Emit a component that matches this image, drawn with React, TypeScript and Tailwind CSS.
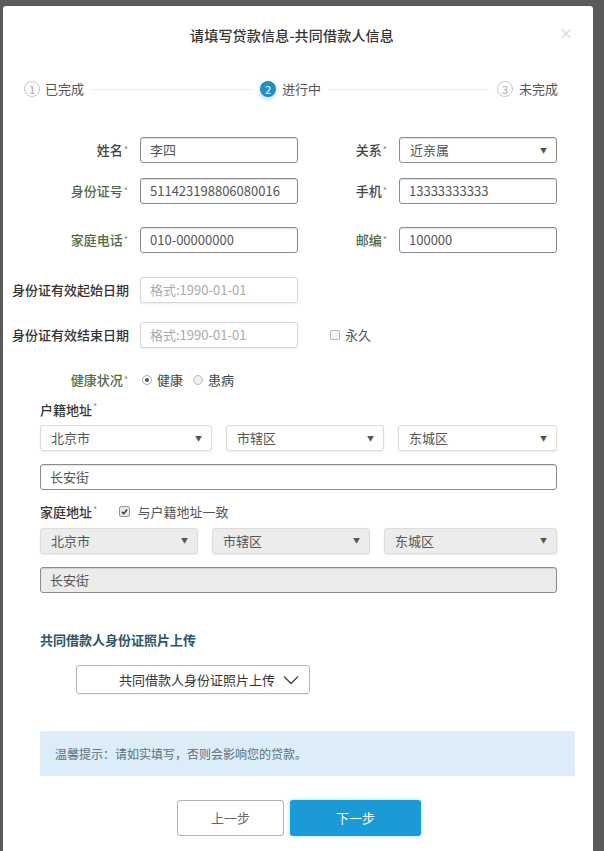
import React from "react";

const font = { fontFamily: '"Microsoft YaHei", "Noto Sans CJK SC", "Noto Sans", sans-serif' };

function Label({ text, green = false, star = true, w }: { text: string; green?: boolean; star?: boolean; w: string }) {
  return (
    <div className={`${w} shrink-0 text-right text-[13px] font-medium ${green ? "text-[#4d6b45]" : "text-[#444]"}`}>
      {text}
      {star && <sup className="text-[9px] text-[#999] ml-[1px] relative -top-[2px]">*</sup>}
    </div>
  );
}

function TextBox({ value, placeholder, w, light = false, gray = false }: { value?: string; placeholder?: string; w: string; light?: boolean; gray?: boolean }) {
  return (
    <div
      className={`${w} h-[26px] shrink-0 rounded-[3px] border flex items-center px-[9px] text-[13px] ${
        light ? "border-[#d8d8d8] shadow-[0_1px_2px_rgba(0,0,0,0.08)]" : "border-[#8c8c8c] shadow-[inset_0_1px_1px_rgba(0,0,0,0.12)]"
      } ${gray ? "bg-[#ececec]" : "bg-white"} ${value ? "text-[#555]" : "text-[#aaa]"}`}
    >
      {value ?? placeholder}
    </div>
  );
}

function Select({ value, w, light = false, gray = false }: { value: string; w: string; light?: boolean; gray?: boolean }) {
  return (
    <div
      className={`${w} h-[26px] shrink-0 rounded-[3px] border flex items-center justify-between pl-[10px] pr-[9px] text-[13px] text-[#555] ${
        light ? "border-[#dcdcdc] shadow-[0_1px_2px_rgba(0,0,0,0.08)]" : "border-[#8c8c8c] shadow-[inset_0_1px_1px_rgba(0,0,0,0.12)]"
      } ${gray ? "bg-[#ececec]" : "bg-white"}`}
    >
      <span>{value}</span>
      <span className="text-[7px] text-[#555]">▼</span>
    </div>
  );
}

function StepCircle({ n, active = false }: { n: number; active?: boolean }) {
  return (
    <div
      className={`w-[16px] h-[16px] rounded-full flex items-center justify-center text-[11px] shrink-0 ${
        active ? "bg-[#1f8fc4] text-white shadow-[0_2px_4px_rgba(31,143,196,0.35)]" : "border border-[#c8c8c8] text-[#aaa] bg-white"
      }`}
    >
      {n}
    </div>
  );
}

export default function App() {
  return (
    <div className="min-h-screen bg-[#5a5a5a] pl-[3px] pr-[11px] pt-[6px] overflow-hidden" style={font}>
      <div className="bg-white rounded-t-[3px] h-[845px] flex flex-col">
        {/* header */}
        <div className="relative h-[58px] flex items-center justify-center">
          <div className="text-[14px] text-[#333] font-medium tracking-[0.2px] -ml-[12px] mt-[1px]">请填写贷款信息-共同借款人信息</div>
          <div className="absolute right-[20px] top-[16px] text-[#d0d0d0] text-[14px]">×</div>
        </div>

        {/* steps */}
        <div className="flex items-center pl-[21px] pr-[35px] mt-[16px] h-[18px]">
          <StepCircle n={1} />
          <span className="ml-[5px] text-[13px] text-[#555]">已完成</span>
          <div className="flex-1 mx-[8px] h-px bg-[#ececec]" />
          <StepCircle n={2} active />
          <span className="ml-[6px] text-[13px] text-[#555]">进行中</span>
          <div className="flex-1 mx-[8px] h-px bg-[#ececec]" />
          <StepCircle n={3} />
          <span className="ml-[6px] text-[13px] text-[#555]">未完成</span>
        </div>

        {/* form */}
        <div className="mt-[39px] flex flex-col">
          <div className="flex items-center">
            <Label text="姓名" w="w-[125px]" />
            <div className="ml-[12px]"><TextBox value="李四" w="w-[158px]" /></div>
            <Label text="关系" w="w-[89px]" />
            <div className="ml-[12px]"><Select value="近亲属" w="w-[158px]" /></div>
          </div>
          <div className="flex items-center mt-[15px]">
            <Label text="身份证号" green w="w-[125px]" />
            <div className="ml-[12px]"><TextBox value="511423198806080016" w="w-[158px]" /></div>
            <Label text="手机" w="w-[89px]" />
            <div className="ml-[12px]"><TextBox value="13333333333" w="w-[158px]" /></div>
          </div>
          <div className="flex items-center mt-[23px]">
            <Label text="家庭电话" green w="w-[125px]" />
            <div className="ml-[12px]"><TextBox value="010-00000000" w="w-[158px]" /></div>
            <Label text="邮编" green w="w-[89px]" />
            <div className="ml-[12px]"><TextBox value="100000" w="w-[158px]" /></div>
          </div>
          <div className="flex items-center mt-[24px]">
            <div className="w-[125px] pl-[9px] text-[13px] font-medium text-[#333] whitespace-nowrap">身份证有效起始日期</div>
            <div className="ml-[12px]"><TextBox placeholder="格式:1990-01-01" light w="w-[158px]" /></div>
          </div>
          <div className="flex items-center mt-[19px]">
            <div className="w-[125px] pl-[9px] text-[13px] font-medium text-[#333] whitespace-nowrap">身份证有效结束日期</div>
            <div className="ml-[12px]"><TextBox placeholder="格式:1990-01-01" light w="w-[158px]" /></div>
            <div className="ml-[32px] flex items-center gap-[5px] text-[13px] text-[#555]">
              <span className="w-[10px] h-[10px] border border-[#bbb] bg-[#f3f3f3] rounded-[1px]" />
              永久
            </div>
          </div>
          <div className="flex items-center mt-[22px]">
            <Label text="健康状况" green w="w-[125px]" />
            <div className="ml-[14px] flex items-center text-[13px] text-[#444]">
              <span className="w-[10px] h-[10px] rounded-full border border-[#aaa] flex items-center justify-center">
                <span className="w-[4px] h-[4px] rounded-full bg-[#555]" />
              </span>
              <span className="ml-[5px]">健康</span>
              <span className="ml-[10px] w-[10px] h-[10px] rounded-full border border-[#bbb] bg-[#f0f0f0]" />
              <span className="ml-[5px]">患病</span>
            </div>
          </div>
        </div>

        {/* addresses */}
        <div className="pl-[37px] pr-[36px] mt-[10px]">
          <div className="text-[13px] font-medium text-[#333]">
            户籍地址<sup className="text-[9px] text-[#999] ml-[1px]">*</sup>
          </div>
          <div className="flex gap-[14px] mt-[6px]">
            <Select value="北京市" light w="w-[172px]" />
            <Select value="市辖区" light w="w-[158px]" />
            <Select value="东城区" light w="flex-1" />
          </div>
          <div className="mt-[13px]"><TextBox value="长安街" w="w-full" /></div>

          <div className="flex items-center mt-[12px] text-[13px]">
            <span className="font-medium text-[#333]">家庭地址<sup className="text-[9px] text-[#999] ml-[1px]">*</sup></span>
            <span className="ml-[22px] w-[11px] h-[11px] rounded-[2px] border border-[#999] bg-[#e8e8e8] flex items-center justify-center">
              <svg width="9" height="9" viewBox="0 0 10 10"><path d="M2 5.2 L4.2 7.4 L8 2.8" stroke="#333" strokeWidth="1.5" fill="none" /></svg>
            </span>
            <span className="ml-[7px] text-[#555]">与户籍地址一致</span>
          </div>
          <div className="flex gap-[14px] mt-[6px]">
            <Select value="北京市" light gray w="w-[158px]" />
            <Select value="市辖区" light gray w="w-[158px]" />
            <Select value="东城区" light gray w="flex-1" />
          </div>
          <div className="mt-[13px]"><TextBox value="长安街" gray w="w-full" /></div>

          <div className="mt-[37px] text-[13px] font-bold text-[#2d5566]">共同借款人身份证照片上传</div>
          <div className="mt-[16px] ml-[36px] w-[234px] h-[29px] rounded-[3px] border border-[#b5b5b5] flex items-center justify-end pr-[10px] text-[13px] text-[#333] shadow-[0_1px_2px_rgba(0,0,0,0.06)]">
            共同借款人身份证照片上传
            <svg className="ml-[8px]" width="16" height="10" viewBox="0 0 16 10">
              <path d="M1 1.5 L8 8.5 L15 1.5" stroke="#444" strokeWidth="1.3" fill="none" />
            </svg>
          </div>
        </div>

        {/* alert */}
        <div className="ml-[37px] mr-[18px] mt-[37px] h-[45px] bg-[#dcedf8] rounded-[2px] flex items-center pl-[15px] text-[12px] text-[#5a6f80]">
          温馨提示：请如实填写，否则会影响您的贷款。
        </div>

        {/* buttons */}
        <div className="flex justify-center gap-[6px] mt-[24px] ml-[2px]">
          <div className="w-[107px] h-[36px] rounded-[3px] border border-[#b0b0b0] bg-white flex items-center justify-center text-[13px] text-[#666]">上一步</div>
          <div className="w-[131px] h-[36px] rounded-[3px] bg-[#1a9ad6] flex items-center justify-center text-[13px] text-white shadow-[0_0_4px_rgba(26,154,214,0.4)]">下一步</div>
        </div>
      </div>
    </div>
  );
}
